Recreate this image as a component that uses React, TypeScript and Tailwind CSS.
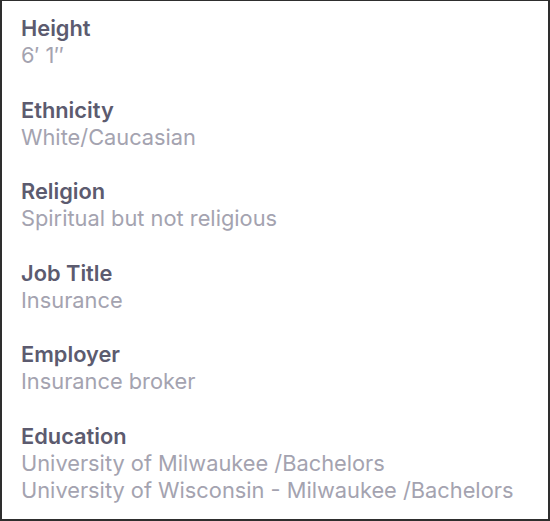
const rows: { label: string; values: string[] }[] = [
  { label: "Height", values: ["6′ 1″"] },
  { label: "Ethnicity", values: ["White/Caucasian"] },
  { label: "Religion", values: ["Spiritual but not religious"] },
  { label: "Job Title", values: ["Insurance"] },
  { label: "Employer", values: ["Insurance broker"] },
  {
    label: "Education",
    values: [
      "University of Milwaukee /Bachelors",
      "University of Wisconsin - Milwaukee /Bachelors",
    ],
  },
];

export default function App() {
  return (
    <div className="h-[521px] w-[550px] bg-white">
      <div
        className="flex h-full flex-col gap-[27.5px] border-2 border-t border-[#2e2e2e] bg-white pl-[19px] pr-4 pt-[14px]"
        style={{ fontFamily: "Inter, 'Noto Sans', sans-serif" }}
      >
        {rows.map((row) => (
          <div key={row.label} className="flex flex-col">
            <div className="text-[21.8px] font-semibold leading-[27px] text-[#5c5b6f]">
              {row.label}
            </div>
            {row.values.map((v) => (
              <div key={v} className="text-[21.8px] leading-[27px] text-[#a4a3b0]">
                {v}
              </div>
            ))}
          </div>
        ))}
      </div>
    </div>
  );
}
